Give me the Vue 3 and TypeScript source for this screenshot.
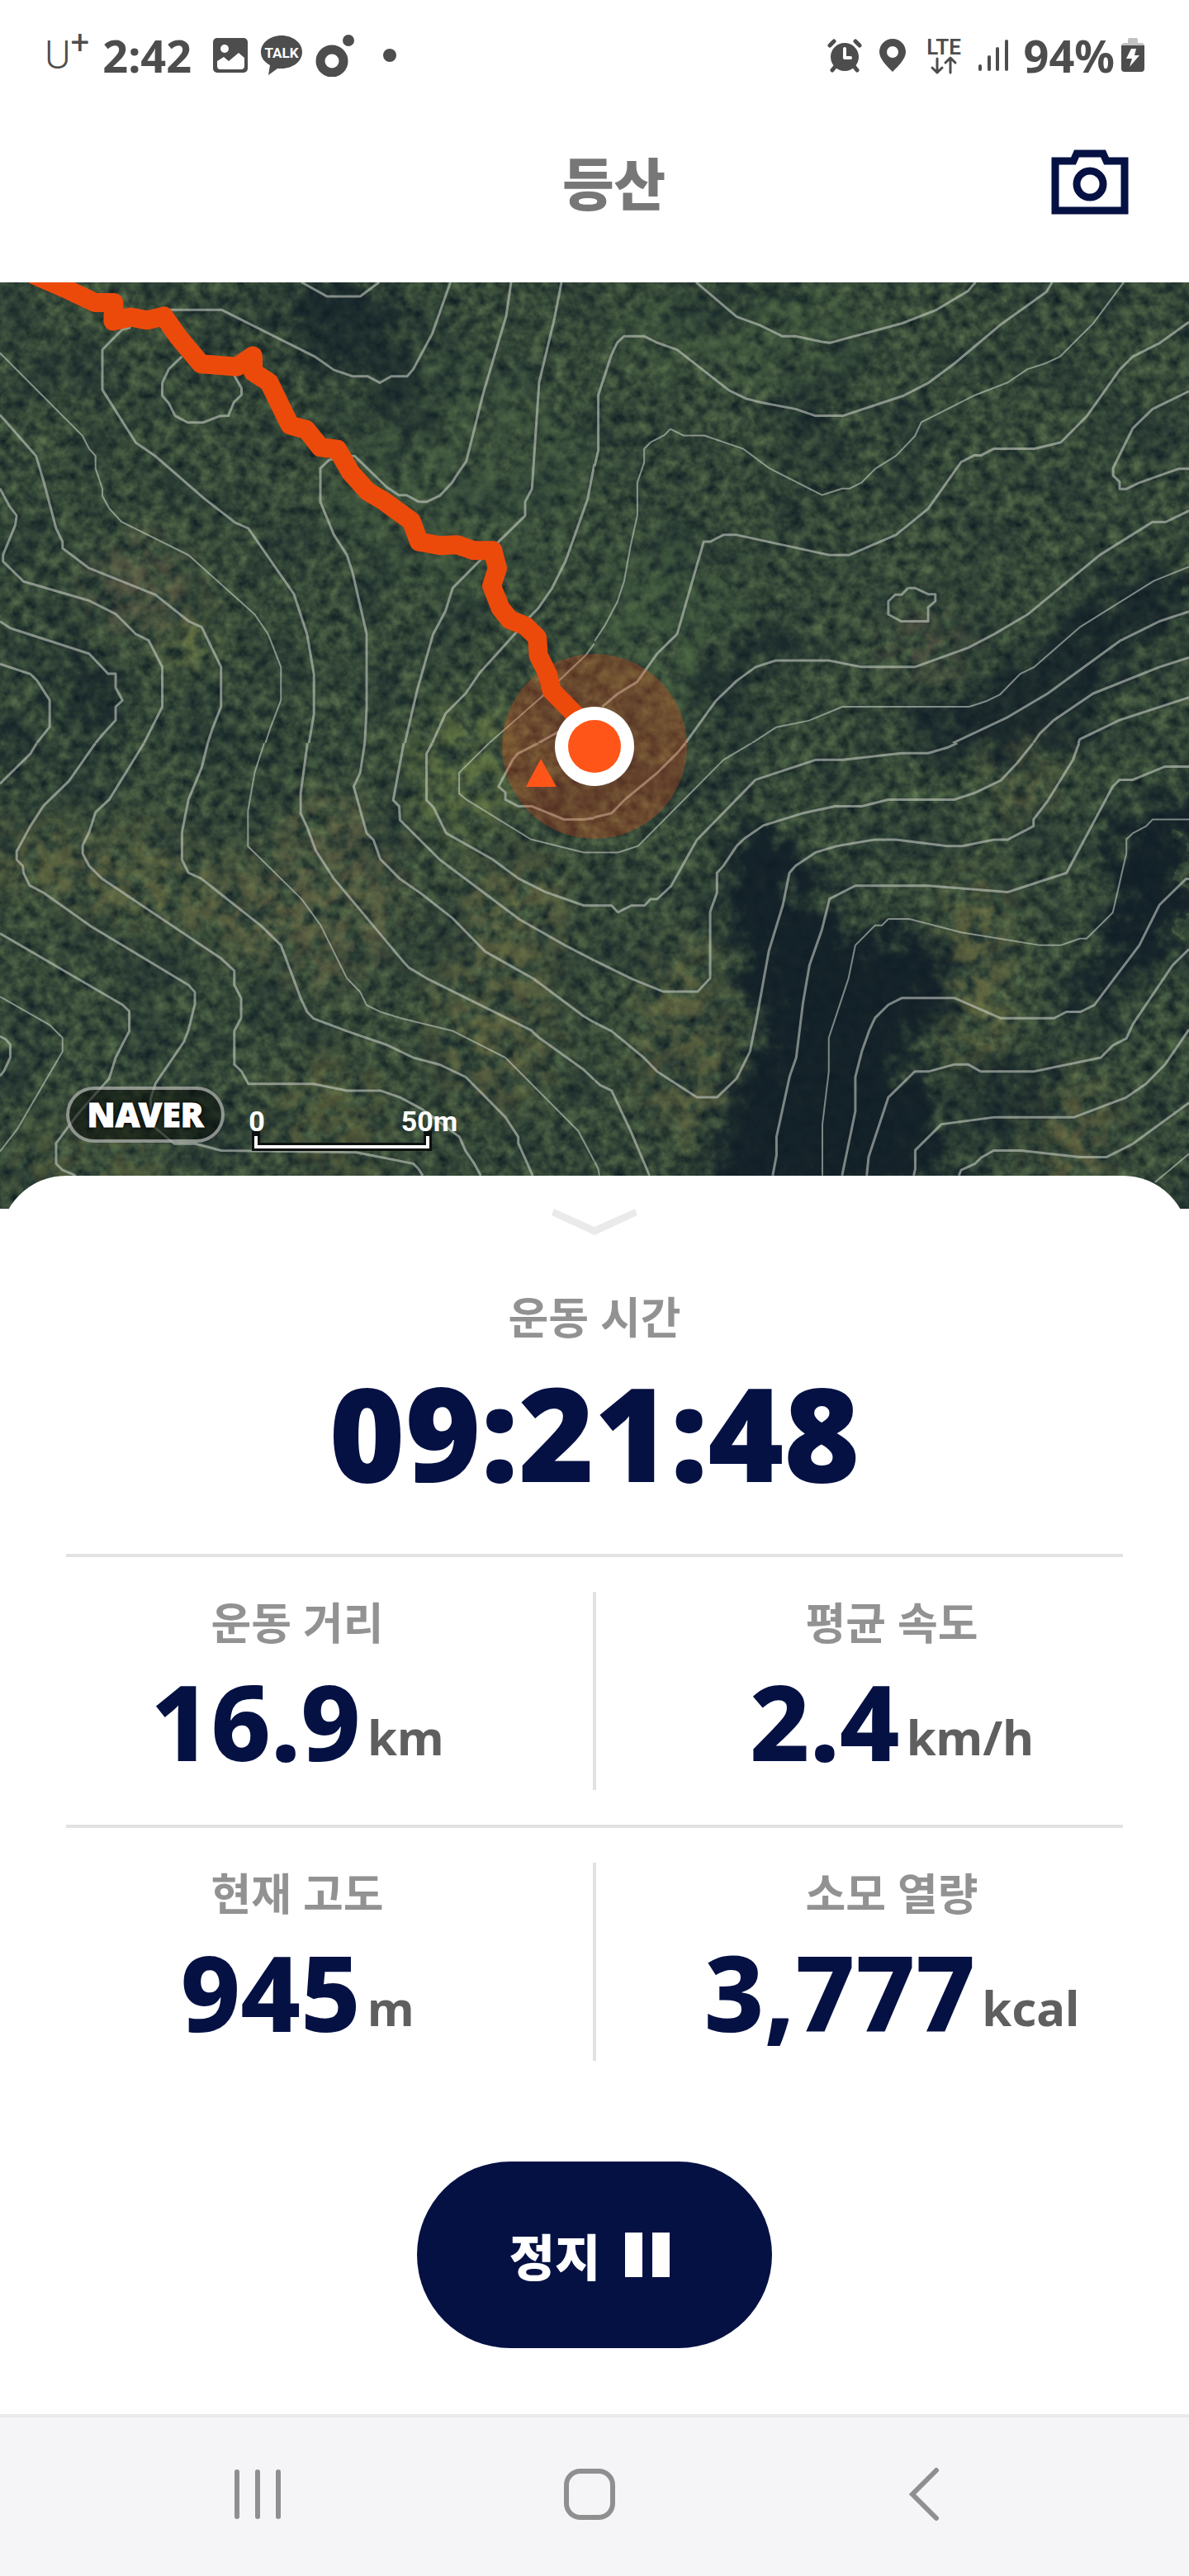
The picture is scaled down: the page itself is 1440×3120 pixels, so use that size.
<script setup lang="ts">
interface Stat {
  label: string
  value: string
  unit: string
}

interface Tile {
  id: string
  x: number
  y: number
  height: number
  major: string[]
  minor: string[]
}

interface Patch {
  cx: number
  cy: number
  rx: number
  ry: number
  color: string
}

const rows: Stat[][] = [
  [
    { label: '운동 거리', value: '16.9', unit: 'km' },
    { label: '평균 속도', value: '2.4', unit: 'km/h' },
  ],
  [
    { label: '현재 고도', value: '945', unit: 'm' },
    { label: '소모 열량', value: '3,777', unit: 'kcal' },
  ],
]

// Contour lines, one set per map tile, in tile units (1568 x 1568).
const tiles: Tile[] = [
  {
    id: 'nw', x: 0, y: -2, height: 560,
    major: [
      '795,5 862,53 950,53 1000,5',
      '440,99 585,99 830,257 880,302 930,324 970,324 1002,346 1032,324 1074,324 1090,300 1140,180 1188,5',
      '345,158 322,166 270,234 270,370 358,549 410,595 540,740 620,820 655,840 775,1062 810,1200 828,1335 828,1470 815,1568',
      '480,257 445,300 428,347 428,390 445,415 462,458 495,481 535,481 580,459 602,458 617,412 637,387 637,365 617,320',
      '1348,5 1335,120 1275,380 1230,612 1212,645 1192,685 1160,729 1125,750 1105,750 1072,727 1052,727 1020,700 935,594 915,594 868,608 845,636 845,750 880,860 915,930 930,990 967,1198 967,1450 962,1568',
      '1481,5 1462,130 1422,345 1403,706 1385,750 1385,797 1315,885 1265,950 1194,1042 1175,1120 1142,1200 1100,1390 1068,1568',
      '1568,620 1550,740 1492,950 1455,1045 1420,1110 1395,1143 1360,1195 1265,1330 1228,1400 1175,1468 1140,1568',
      '0,455 95,594 115,680 148,840 165,885 165,907 235,975 410,1065 498,1155 532,1175 583,1310 583,1445 560,1520 548,1568',
      '0,705 25,765 44,797 40,830 8,930 8,952 62,1020 235,1085 305,1130 358,1198 392,1220 428,1310 428,1445 380,1568',
      '0,1155 27,1178 235,1265 285,1333 305,1333 305,1380 323,1423 305,1445 305,1490 270,1540 252,1568',
      '0,1300 80,1334 97,1355 131,1422 131,1513 97,1568',
      '1500,1510 1420,1568',
    ],
    minor: [
      '0,245 217,525 235,570 252,594 252,637 270,705 270,730 288,772 320,817 498,931 672,1132 707,1198 741,1310 741,1423 715,1510 700,1568',
      '1568,1230 1545,1270 1475,1355 1430,1410 1290,1568',
    ],
  },
  {
    id: 'ne', x: 720, y: -2, height: 560,
    major: [
      '268,5 375,122 435,150 495,188 530,188 600,207 620,211 810,145 900,100 985,35 1005,5',
      '0,630 10,575 10,388 45,250 60,210 78,188 131,188 165,210 218,234 355,372 400,400 440,413 530,435 583,458 655,458 815,390 880,347 950,280 1070,150 1192,38 1207,5',
      '1568,140 1490,212 1420,257 1385,302 1298,460 1230,548 1160,570 1053,570 1020,592 1002,592 967,615 880,773 795,862 672,930 618,930 375,862 340,862 305,885 288,885 218,1198 165,1265 113,1360 62,1400 20,1445',
      '1568,375 1472,435 1420,500 1368,635 1368,661 1385,682 1385,706 1403,706 1437,685 1540,638 1568,638',
      '1568,780 1507,818 1472,818 1333,930 1142,1132 1055,1198 985,1245 845,1310 705,1310 618,1288 478,1288 425,1310 375,1357 320,1425 240,1568',
      '827,1042 845,1042 880,1063 899,1063 899,1087 880,1108 880,1155 809,1155 775,1132 775,1087 793,1065 810,1065 827,1042',
      '1568,1122 1490,1155 1385,1222 1195,1400 1090,1480 945,1568',
      '1568,1278 1490,1310 1315,1400 1210,1492 1175,1535 1157,1568',
      '1568,1413 1385,1490 1280,1555 1276,1568',
    ],
    minor: [
      '1396,5 1315,145 1228,257 1190,280 1142,300 1090,345 1000,390 862,480 845,527 795,594 740,638 705,684 672,705 653,705 600,727 460,635 392,570 290,525 235,525 200,503 185,523 148,548 131,570 131,617 113,684 113,795 95,900 78,1020 60,1090 27,1170 0,1222',
      '1568,970 1475,1018 1280,1175 1160,1310 1123,1333 1070,1403 1035,1425 988,1445 653,1445 565,1492 480,1514 415,1568',
    ],
  },
  {
    id: 'sw', x: 0, y: 558, height: 580,
    major: [
      '97,0 80,35 0,133',
      '252,0 182,124 115,205 80,272 44,355 44,382 60,402 62,425 78,466 115,490 240,600 497,792 514,815 514,855 497,940 485,978 410,1115 397,1165 400,1250 460,1312 515,1312 583,1334 940,1340 1090,1377 1103,1393 1115,1416',
      '380,0 288,185 252,227 235,292 218,335 218,362 235,402 270,445 583,705 618,745 618,792 636,835 636,900 618,943 618,1052 637,1075 655,1116 827,1116 915,1138 1003,1138 1055,1160 1115,1200 1212,1290 1228,1335 1250,1375 1268,1416',
      '548,0 532,80 497,185 480,292 480,382 497,425 530,443 690,600 741,662 793,835 810,880 827,902 915,943 1020,988 1090,1030 1160,1053 1228,1093 1333,1225 1367,1290 1367,1310 1405,1416',
      '811,0 793,165 793,230 810,275 833,352 880,443 1060,710 1078,735 1125,770 1400,940 1420,963 1540,1070 1568,1103',
      '962,0 950,97 933,142 967,295 985,317 1003,380 1055,445 1110,492 1195,575 1280,683 1405,770 1540,895 1568,915',
      '1065,0 1037,187 1053,207 1055,252 1160,382 1370,577 1490,662 1568,712',
      '1140,0 1125,35 1125,187 1143,210 1177,295 1298,380 1367,443 1437,487 1540,532 1568,532',
      '1420,0 1365,35 1352,55 1315,142 1333,162 1333,185 1367,207 1403,207 1487,250 1540,250 1568,245',
      '0,623 323,857 341,878 341,943 305,1030 288,1098 240,1165 205,1215 148,1310 148,1377 165,1398 200,1416',
      '0,960 15,970 27,987 27,1030 10,1075 0,1090',
    ],
    minor: [
      '697,0 672,95 654,222 654,338 795,510 845,595 915,770 950,815 967,858 1003,880 1055,900 1195,943 1333,1030 1525,1270 1568,1370',
      '1290,0 1211,97 1211,165 1230,185 1400,315 1540,358 1568,358',
      '0,830 130,922 165,965 165,1010 45,1265 0,1337',
    ],
  },
  {
    id: 'se', x: 720, y: 558, height: 580,
    major: [
      '0,1103 15,1120 45,1138 97,1275 145,1416',
      '0,915 45,943 130,1030 165,1075 270,1160 323,1160 375,1098 410,1010 428,900 460,680 497,530 514,425 530,402 583,358 640,337 740,316 795,316 930,337 970,337 1055,316 1090,316 1158,272 1158,250 1195,190 1262,55 1278,0',
      '0,712 100,773 182,814 272,814 305,770 305,553 323,490 323,425 340,402 375,337 395,313 445,270 548,230 635,207 705,207 775,185 950,185 1003,163 1072,122 1115,65 1157,0',
      '0,532 45,532 62,554 97,532 132,532 148,511 165,511 202,468 270,317 425,120 583,55 655,55 810,33 880,33 930,15 957,0',
      '0,243 45,230 80,185 165,98 220,30 240,0',
      '470,1416 480,1350 480,1290 515,1090 532,1030 550,850 567,727 600,610 620,510 688,467 880,467 1090,488 1245,425 1367,142 1385,120 1420,120 1505,77 1568,77',
      '653,1416 688,1205 688,1093 705,1010 725,940 740,900 775,857 810,835 950,835 1072,901 1212,901 1245,880 1282,880 1318,858 1437,662 1490,530 1560,445 1568,445',
      '718,1416 723,1355 775,1160 845,1075 882,1075 950,1052 985,1052 1018,1075 1160,1075 1335,1030 1367,990 1403,967 1420,920 1525,727 1568,675',
      '842,1416 846,1395 846,1333 915,1248 1055,1225 1265,1225 1403,1160 1455,1115 1505,1052 1568,938',
      '961,1416 967,1398 1003,1378 1020,1357 1053,1334 1125,1334 1280,1356 1350,1356 1420,1312 1568,1178',
    ],
    minor: [
      '0,1370 10,1395 13,1416',
      '0,358 62,358 115,337 340,55 415,0',
      '601,1416 601,1250 618,1075 618,965 670,770 688,662 740,597 758,597 775,576 830,576 967,620 1175,662 1230,662 1280,640 1298,640 1367,555 1403,360 1403,315 1420,295 1455,272 1472,250 1568,250',
      '1478,1438 1568,1345',
    ],
  },
]

const route =
  '90,-20 170,25 250,74 300,74 298,137 345,123 388,134 432,120 470,190 530,282 625,292 667,255 668,310 710,345 740,425 765,490 808,505 845,565 890,572 925,650 970,715 1010,745 1085,815 1105,885 1160,898 1205,895 1250,915 1300,915 1312,975 1297,1035 1320,1110 1345,1150 1385,1170 1417,1210 1420,1270 1445,1335 1455,1390 1520,1475 1568,1540'

// Autumn foliage and soil showing between the trees.
const patches: Patch[] = [
  { cx: 60, cy: 700, rx: 80, ry: 50, color: '#7d7a45' },
  { cx: 160, cy: 720, rx: 100, ry: 60, color: '#84804a' },
  { cx: 230, cy: 430, rx: 30, ry: 44, color: '#a2a850' },
  { cx: 170, cy: 370, rx: 70, ry: 60, color: '#7a6a50' },
  { cx: 290, cy: 760, rx: 80, ry: 60, color: '#7f7a4a' },
  { cx: 400, cy: 740, rx: 90, ry: 120, color: '#7f754c' },
  { cx: 560, cy: 590, rx: 70, ry: 90, color: '#7f9148' },
  { cx: 620, cy: 770, rx: 70, ry: 80, color: '#857d49' },
  { cx: 830, cy: 920, rx: 60, ry: 130, color: '#7c7645' },
  { cx: 600, cy: 900, rx: 80, ry: 110, color: '#7f7a47' },
  { cx: 400, cy: 1010, rx: 70, ry: 80, color: '#75723f' },
  { cx: 1185, cy: 830, rx: 44, ry: 130, color: '#948c4b' },
  { cx: 1235, cy: 590, rx: 36, ry: 60, color: '#857846' },
  { cx: 1300, cy: 1040, rx: 50, ry: 80, color: '#8b7d48' },
  { cx: 1120, cy: 440, rx: 60, ry: 36, color: '#6a574b' },
  { cx: 100, cy: 1070, rx: 100, ry: 50, color: '#6f7040' },
  { cx: 900, cy: 60, rx: 160, ry: 60, color: '#4f6a45' },
  { cx: 560, cy: 230, rx: 160, ry: 140, color: '#4a6445' },
  { cx: 800, cy: 420, rx: 80, ry: 120, color: '#4f6d45' },
]

const shadows: string[] = [
  '955,920 1040,905 1075,1040 1140,1100 1240,1100 1260,1230 1180,1290 1250,1400 1230,1568 920,1568 950,1400 1010,1250 960,1100',
  '1290,690 1370,610 1430,540 1568,450 1568,560 1450,670 1400,780 1260,800 1180,780',
  '1470,890 1568,870 1568,1100 1500,1170 1440,1240 1390,1220 1470,1100',
  '360,0 500,0 540,120 580,230 520,260 480,170 420,150 380,80',
  '900,0 1010,0 990,40 930,50',
  '960,620 1030,560 1040,620 960,720 900,720',
  '80,600 160,650 150,770 90,740',
  '0,750 60,760 50,820 0,810',
  '230,770 350,780 400,820 300,800',
  '1040,180 1100,200 1090,280 1040,270',
  '1060,280 1090,400 1040,400',
  '1270,1300 1380,1330 1400,1420 1280,1400',
]
</script>

<template>
  <main class="screen">
    <div class="status">
      <div class="status-side">
        <span class="carrier">U<sup>+</sup></span>
        <span class="clock">2:42</span>
        <svg class="after-clock" width="42" height="42" viewBox="0 0 42 42" aria-hidden="true">
          <rect width="42" height="42" rx="5" fill="#4d4d4d" />
          <circle cx="14" cy="13" r="5" fill="#fff" />
          <path d="M5 28 13 23 19 28 31 18 38 24V34Q38 38 34 38H9Q5 38 5 34Z" fill="#fff" />
        </svg>
        <svg width="50" height="48" viewBox="0 0 50 48" aria-hidden="true">
          <path d="M25 0C39 0 50 9 50 20S39 40 25 40Q22 40 20 40L9 48 11 36C4 32 0 27 0 20 0 9 11 0 25 0Z" fill="#4d4d4d" />
          <text x="25" y="27" class="talk" text-anchor="middle">TALK</text>
        </svg>
        <svg width="48" height="52" viewBox="0 0 48 52" aria-hidden="true">
          <circle cx="20" cy="33" r="14" fill="none" stroke="#4d4d4d" stroke-width="11" />
          <circle cx="40" cy="8" r="7" fill="#4d4d4d" />
        </svg>
        <svg class="more" width="16" height="16" viewBox="0 0 16 16" aria-hidden="true">
          <circle cx="8" cy="8" r="8" fill="#4d4d4d" />
        </svg>
      </div>
      <div class="status-side">
        <svg width="42" height="42" viewBox="0 0 42 42" aria-hidden="true">
          <circle cx="21" cy="23" r="17" fill="#4d4d4d" />
          <path d="M3 9 8 4M39 9 34 4M6 39 10 34M36 39 32 34" stroke="#4d4d4d" stroke-width="5" stroke-linecap="round" />
          <path d="M21 13V24H28" fill="none" stroke="#fff" stroke-width="4" stroke-linecap="round" stroke-linejoin="round" />
        </svg>
        <svg width="42" height="42" viewBox="0 0 42 42" aria-hidden="true">
          <path fill-rule="evenodd" d="M21 1C30 1 37 8 37 17 37 25 28 34 21 41 14 34 5 25 5 17 5 8 12 1 21 1ZM21 10A7 7 0 1 0 21 24 7 7 0 1 0 21 10Z" fill="#4d4d4d" />
        </svg>
        <svg width="50" height="62" viewBox="0 0 50 62" aria-hidden="true">
          <text x="25" y="30" class="lte" text-anchor="middle">LTE</text>
          <path d="M17 35V52M11 46 17 52 23 46M33 52V34M27 40 33 34 39 40" fill="none" stroke="#4d4d4d" stroke-width="3" stroke-linecap="round" stroke-linejoin="round" />
        </svg>
        <svg width="40" height="42" viewBox="0 0 40 42" aria-hidden="true">
          <path d="M3 34V38M14 23V38M24 13V38M35 4V38" stroke="#4d4d4d" stroke-width="4" stroke-linecap="round" />
        </svg>
        <span class="battery">
          94%
          <svg width="28" height="42" viewBox="0 0 28 42" aria-hidden="true">
            <path d="M0 10Q0 6 4 6H8V2Q8 0 10 0H18Q20 0 20 2V6H24Q28 6 28 10Z" fill="#c2c2c2" />
            <path d="M0 9H28V37Q28 41 24 41H4Q0 41 0 37Z" fill="#4d4d4d" />
            <path d="M12 13H18L16 21H22L10 35 13 25H6Z" fill="#fff" />
          </svg>
        </span>
      </div>
    </div>

    <header class="header">
      <h1>등산</h1>
      <button class="camera" type="button" aria-label="카메라">
        <svg width="94" height="79" viewBox="0 0 94 79" aria-hidden="true">
          <path d="M5 14H27L31 5H63L67 14H89V74H5Z" fill="none" stroke="#051143" stroke-width="9" />
          <circle cx="47" cy="42" r="16" fill="none" stroke="#051143" stroke-width="9" />
        </svg>
      </button>
    </header>

    <section class="map" aria-label="지도">
      <svg class="map-canvas" viewBox="0 0 1440 1122" preserveAspectRatio="xMidYMid slice" aria-hidden="true">
        <defs>
          <filter id="foliage" x="0" y="0" width="100%" height="100%" color-interpolation-filters="sRGB">
            <feTurbulence type="fractalNoise" baseFrequency="0.07" numOctaves="3" seed="7" />
            <feColorMatrix
              values="0.36 0 0 0 0.03
                      0.4 0 0 0 0.085
                      0.2 0 0 0 0.12
                      0 0 0 0 1"
            />
          </filter>
          <filter id="relief" x="0" y="0" width="100%" height="100%" color-interpolation-filters="sRGB">
            <feTurbulence type="fractalNoise" baseFrequency="0.014" numOctaves="4" seed="11" />
            <feColorMatrix
              values="0 0 0 0 0.07
                      0 0 0 0 0.13
                      0 0 0 0 0.17
                      3 0 0 0 -1.35"
            />
          </filter>
          <filter id="leaves" x="0" y="0" width="100%" height="100%" color-interpolation-filters="sRGB">
            <feGaussianBlur in="SourceGraphic" stdDeviation="24" result="soft" />
            <feTurbulence type="fractalNoise" baseFrequency="0.045" numOctaves="3" seed="19" />
            <feColorMatrix
              values="0 0 0 0 0
                      0 0 0 0 0
                      0 0 0 0 0
                      0 3.4 0 0 -1.25"
              result="holes"
            />
            <feComposite in="soft" in2="holes" operator="in" />
          </filter>
          <filter id="shade" x="0" y="0" width="100%" height="100%" color-interpolation-filters="sRGB">
            <feGaussianBlur in="SourceGraphic" stdDeviation="16" result="soft" />
            <feTurbulence type="fractalNoise" baseFrequency="0.03" numOctaves="4" seed="4" result="edge" />
            <feDisplacementMap in="soft" in2="edge" scale="110" xChannelSelector="R" yChannelSelector="G" />
          </filter>
        </defs>

        <rect width="1440" height="1122" filter="url(#foliage)" />
        <rect width="1440" height="1122" filter="url(#relief)" opacity="0.35" />
        <g filter="url(#leaves)" opacity="0.5">
          <rect width="1440" height="1122" fill="none" />
          <ellipse v-for="(p, i) in patches" :key="i" :cx="p.cx" :cy="p.cy" :rx="p.rx" :ry="p.ry" :fill="p.color" />
        </g>
        <g filter="url(#shade)" opacity="0.88">
          <rect width="1440" height="1122" fill="none" />
          <svg y="-2" width="1440" height="1130" viewBox="0 0 1568 1568" preserveAspectRatio="none">
            <polygon
              v-for="(s, i) in shadows"
              :key="i"
              :points="s"
              fill="#101d27"
              :opacity="i === 1 ? 0.8 : i < 3 ? 1 : 0.7"
            />
          </svg>
        </g>

        <svg
          v-for="t in tiles"
          :key="t.id"
          :x="t.x"
          :y="t.y"
          width="720"
          :height="t.height"
          viewBox="0 0 1568 1568"
          preserveAspectRatio="none"
        >
          <polyline v-for="line in t.major" :key="line" :points="line" class="contour" />
          <polyline v-for="line in t.minor" :key="line" :points="line" class="contour contour-minor" />
        </svg>

        <circle cx="720" cy="562" r="112" fill="#e8501a" fill-opacity="0.3" />
        <svg y="-2" width="720" height="560" viewBox="0 0 1568 1568" preserveAspectRatio="none">
          <polyline :points="route" class="route" />
        </svg>
        <path d="M655 577 674 611H637Z" fill="#ff5519" />
        <circle cx="720" cy="562" r="48" fill="#fff" />
        <circle cx="720" cy="562" r="32" fill="#ff5519" />
      </svg>

      <div class="map-legend">
        <span class="brand">NAVER</span>
        <svg class="scale" width="280" height="60" viewBox="0 0 280 60" role="img" aria-label="50m">
          <path d="M14 39V53H222V39" fill="none" stroke="#0c1110" stroke-width="10" stroke-linecap="square" />
          <path d="M14 40V53H222V40" fill="none" stroke="#fff" stroke-width="4" />
          <text x="15" y="34" text-anchor="middle">0</text>
          <text x="224" y="34" text-anchor="middle">50m</text>
        </svg>
      </div>
    </section>

    <section class="sheet">
      <button class="collapse" type="button" aria-label="접기">
        <svg width="104" height="32" viewBox="0 0 104 32" aria-hidden="true">
          <path d="M3 0 52 22 101 0 104 8 52 32 0 8Z" fill="#eaeaea" />
        </svg>
      </button>
      <p class="label time-label">운동 시간</p>
      <p class="time">09:21:48</p>

      <template v-for="(row, i) in rows" :key="i">
        <hr class="rule" />
        <div class="row">
          <div v-for="stat in row" :key="stat.label" class="stat">
            <p class="label">{{ stat.label }}</p>
            <p class="reading">
              <strong>{{ stat.value }}</strong><span>{{ stat.unit }}</span>
            </p>
          </div>
        </div>
      </template>

      <button class="pause" type="button">
        정지
        <svg width="54" height="54" viewBox="0 0 54 54" aria-hidden="true">
          <path d="M0 0H21V54H0ZM33 0H54V54H33Z" fill="#fff" />
        </svg>
      </button>
    </section>

    <nav class="nav">
      <button type="button" aria-label="최근 앱">
        <svg width="64" height="66" viewBox="0 0 64 66" aria-hidden="true">
          <path d="M7 6V60M32 6V60M57 6V60" stroke="#8f8f8f" stroke-width="6" stroke-linecap="round" />
        </svg>
      </button>
      <button type="button" aria-label="홈">
        <svg width="64" height="66" viewBox="0 0 64 66" aria-hidden="true">
          <rect x="4" y="5" width="56" height="56" rx="17" fill="none" stroke="#8f8f8f" stroke-width="6" />
        </svg>
      </button>
      <button type="button" aria-label="뒤로">
        <svg width="64" height="66" viewBox="0 0 64 66" aria-hidden="true">
          <path d="M49 4 20 33 49 62" fill="none" stroke="#8f8f8f" stroke-width="6" stroke-linecap="round" />
        </svg>
      </button>
    </nav>
  </main>
</template>

<style>
body {
  background: #fff;
}
</style>

<style scoped>
.screen {
  display: flex;
  flex-direction: column;
  min-height: 100vh;
  background: #fff;
  font-family: "Noto Sans", "Noto Sans CJK KR", sans-serif;
}

p,
h1,
hr {
  margin: 0;
}

svg {
  display: block;
}

button {
  display: flex;
  align-items: center;
  justify-content: center;
  padding: 0;
  border: 0;
  background: none;
  font: inherit;
  cursor: pointer;
}

.status {
  display: flex;
  justify-content: space-between;
  padding: 36px 54px 0 54px;
  color: #4d4d4d;
}

.status-side {
  display: flex;
  align-items: center;
  gap: 16px;
  height: 62px;
}

.carrier {
  display: flex;
  font-family: Roboto, sans-serif;
  font-size: 48px;
  font-weight: 300;
  line-height: 66px;
}

.carrier sup {
  font-size: 40px;
  font-weight: 400;
  line-height: 36px;
}

.clock,
.battery {
  font-size: 54px;
  font-weight: 700;
  line-height: 62px;
}

.after-clock {
  margin-left: 10px;
}

.more {
  margin-left: 18px;
}

.battery {
  display: flex;
  align-items: center;
  gap: 8px;
}

.talk {
  fill: #fff;
  font-family: Roboto, sans-serif;
  font-size: 17px;
  font-weight: 700;
}

.lte {
  fill: #4d4d4d;
  font-family: Roboto, sans-serif;
  font-size: 26px;
  font-weight: 600;
}

.header {
  display: grid;
  grid-template-columns: 1fr auto 1fr;
  align-items: center;
  height: 244px;
  padding: 0 73px 0 120px;
}

.header h1 {
  grid-column: 2;
  padding-top: 6px;
  color: #777;
  font-size: 68px;
  font-weight: 900;
  line-height: 80px;
}

.camera {
  justify-self: end;
}

.map {
  position: relative;
  aspect-ratio: 1440 / 1122;
  overflow: hidden;
  background: #2b4233;
}

.map-canvas {
  width: 100%;
  height: 100%;
}

.contour {
  fill: none;
  stroke: #c9cfc8;
  stroke-opacity: 0.58;
  stroke-width: 3px;
  stroke-linejoin: round;
  vector-effect: non-scaling-stroke;
}

.contour-minor {
  stroke-width: 2px;
}

.route {
  fill: none;
  stroke: #ec4a0b;
  stroke-width: 23px;
  stroke-linejoin: round;
  stroke-linecap: round;
  vector-effect: non-scaling-stroke;
}

.map-legend {
  position: absolute;
  bottom: 68px;
  left: 80px;
  display: flex;
  align-items: flex-start;
  gap: 24px;
}

.brand {
  box-sizing: border-box;
  width: 192px;
  height: 68px;
  border: 4px solid rgba(255, 255, 255, 0.5);
  border-radius: 34px;
  background: rgba(10, 14, 10, 0.55);
  color: #fff;
  font-size: 41px;
  font-weight: 900;
  line-height: 58px;
  text-align: center;
  text-shadow: 0 0 4px #000, 0 0 4px #000;
  -webkit-text-stroke: 1px #fff;
}

.scale {
  margin-top: 20px;
}

.scale text {
  fill: #fff;
  font-family: Roboto, sans-serif;
  font-size: 34px;
  font-weight: 700;
}

.sheet {
  position: relative;
  display: flex;
  flex: 1;
  flex-direction: column;
  margin-top: -40px;
  padding: 40px 0 80px;
  border-radius: 80px 80px 0 0;
  background: #fff;
}

.sheet::before {
  content: "";
  position: absolute;
  inset: 40px 0 0;
  background: #fff;
}

.sheet > * {
  position: relative;
}

.collapse {
  align-self: center;
}

.label {
  color: #929292;
  font-size: 53px;
  font-weight: 700;
  line-height: 64px;
  text-align: center;
}

.time-label {
  margin-top: 68px;
}

.time {
  margin: 26px 0 68px;
  color: #051143;
  font-size: 157px;
  font-weight: 900;
  line-height: 160px;
  text-align: center;
}

.rule {
  height: 4px;
  margin: 0 80px;
  border: 0;
  background: #e2e2e2;
}

.row {
  display: grid;
  grid-template-columns: 1fr 1fr;
  padding: 42px 0;
}

.stat {
  position: relative;
  height: 240px;
}

.stat + .stat::before {
  content: "";
  position: absolute;
  top: 0;
  bottom: 0;
  left: -2px;
  width: 4px;
  background: #e2e2e2;
}

.stat .label {
  padding-top: 6px;
}

.reading {
  display: flex;
  align-items: flex-end;
  justify-content: center;
  gap: 8px;
  margin-top: 22px;
}

.reading strong {
  color: #051143;
  font-size: 126px;
  font-weight: 800;
  line-height: 128px;
}

.reading span {
  color: #5f5f5f;
  font-size: 58px;
  font-weight: 700;
  line-height: 88px;
}

.pause {
  align-self: center;
  gap: 30px;
  width: 430px;
  height: 226px;
  margin-top: 80px;
  padding-right: 12px;
  border-radius: 113px;
  background: #051143;
  color: #fff;
  font-size: 60px;
  font-weight: 900;
}

.nav {
  display: grid;
  grid-template-columns: repeat(3, 1fr);
  padding: 60px 122px 66px 111px;
  border-top: 4px solid #eaeaea;
  background: #f5f5f8;
}
</style>
